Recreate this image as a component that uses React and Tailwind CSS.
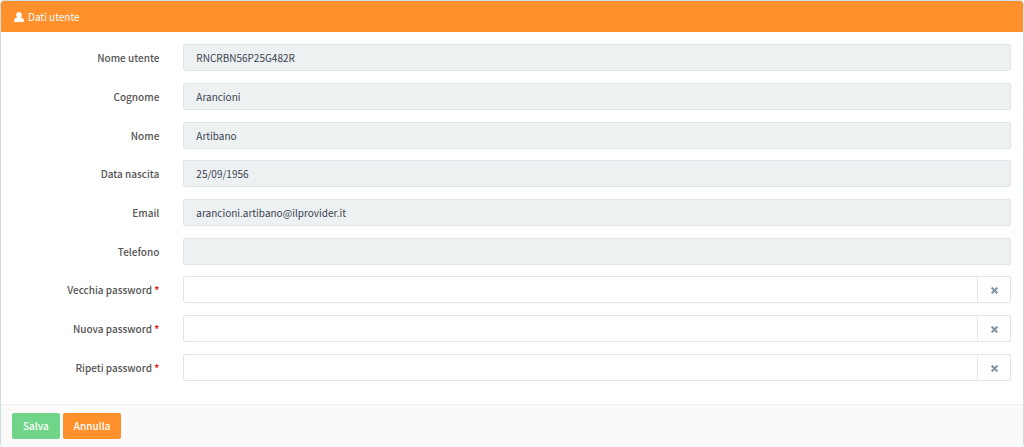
import { useState } from 'react'
import { FaTimes } from 'react-icons/fa'

const personalFields = [
  { id: 'username', label: 'Nome utente', value: 'RNCRBN56P25G482R' },
  { id: 'surname', label: 'Cognome', value: 'Arancioni' },
  { id: 'name', label: 'Nome', value: 'Artibano' }
]

const contactFields = [
  { id: 'birthDate', label: 'Data nascita', value: '25/09/1956' },
  { id: 'email', label: 'Email', value: 'arancioni.artibano@ilprovider.it' },
  { id: 'phone', label: 'Telefono', value: '' }
]

const passwordFields = [
  { id: 'oldPassword', label: 'Vecchia password' },
  { id: 'newPassword', label: 'Nuova password' },
  { id: 'repeatPassword', label: 'Ripeti password' }
]

const emptyPasswords = { oldPassword: '', newPassword: '', repeatPassword: '' }

const UserIcon = () => (
  <svg viewBox="0 0 18 18" className="h-[10px] w-[10px]" fill="currentColor" aria-hidden="true">
    <path d="M9 0C6.300 0 4 2 4 5C4 7.200 5 9.200 6.200 10C2.500 10.200 0 12.500 0 15.800C0 17.200 1 18 2.500 18H15.500C17 18 18 17.200 18 15.800C18 12.500 15.500 10.200 11.800 10C13 9.200 14 7.200 14 5C14 2 11.700 0 9 0Z" />
  </svg>
)

const FormRow = ({ id, label, required, children }) => (
  <div className="flex">
    <label htmlFor={id} className="w-1/6 shrink-0 pt-1.5 pr-3 text-right font-medium text-[#555555]">
      {label}
      {required && <span className="font-bold text-[#e02020]"> *</span>}
    </label>
    <div className="flex h-[27px] flex-1 px-3">{children}</div>
  </div>
)

const ReadOnlyField = ({ id, label, value }) => (
  <FormRow id={id} label={label}>
    <input
      type="text"
      id={id}
      value={value}
      readOnly
      className="w-full rounded-xs border border-[#dde6e9] bg-[#edf1f2] px-3 text-[#3a3f51] outline-none"
    />
  </FormRow>
)

const App = () => {
  const [passwords, setPasswords] = useState(emptyPasswords)

  const setPassword = (id, value) => {
    setPasswords({ ...passwords, [id]: value })
  }

  const onSubmit = (e) => {
    e.preventDefault()
  }

  return (
    <form
      onSubmit={onSubmit}
      className="overflow-hidden rounded-sm border border-[#cfdbe2] bg-white font-['Noto_Sans_CJK_JP','Noto_Sans',sans-serif] text-[10px] leading-[15px]"
    >
      <div className="flex items-center gap-1 bg-[#ff902b] px-[13px] py-2 text-white">
        <UserIcon />
        <h1>Dati utente</h1>
      </div>

      <div className="flex flex-col gap-[11px] pt-3 pb-[23px]">
        <div className="flex flex-col gap-3">
          {personalFields.map((field) => (
            <ReadOnlyField key={field.id} {...field} />
          ))}
        </div>

        <div className="flex flex-col gap-3">
          {contactFields.map((field) => (
            <ReadOnlyField key={field.id} {...field} />
          ))}
        </div>

        <div className="flex flex-col gap-3">
          {passwordFields.map(({ id, label }) => (
            <FormRow key={id} id={id} label={label} required>
              <input
                type="password"
                id={id}
                value={passwords[id]}
                onChange={(e) => setPassword(id, e.target.value)}
                className="min-w-0 flex-1 rounded-l-xs border border-[#dde6e9] px-3 outline-none"
              />
              <button
                type="button"
                aria-label="Cancella"
                onClick={() => setPassword(id, '')}
                className="flex w-[33px] items-center justify-center rounded-r-xs border border-l-0 border-[#dde6e9] pt-px text-[#8093a3]"
              >
                <FaTimes className="size-[9px]" stroke="currentColor" strokeWidth="40" />
              </button>
            </FormRow>
          ))}
        </div>
      </div>

      <div className="flex gap-[3px] border-t border-[#eef1f3] bg-[#fafafa] px-[11px] py-2 font-medium text-white">
        <button type="submit" className="h-[26px] rounded-xs bg-[#70d589] px-[11px] pb-0.5">
          Salva
        </button>
        <button
          type="button"
          onClick={() => setPasswords(emptyPasswords)}
          className="h-[26px] rounded-xs bg-[#ff902b] px-[11px] pb-0.5"
        >
          Annulla
        </button>
      </div>
    </form>
  )
}

export default App
